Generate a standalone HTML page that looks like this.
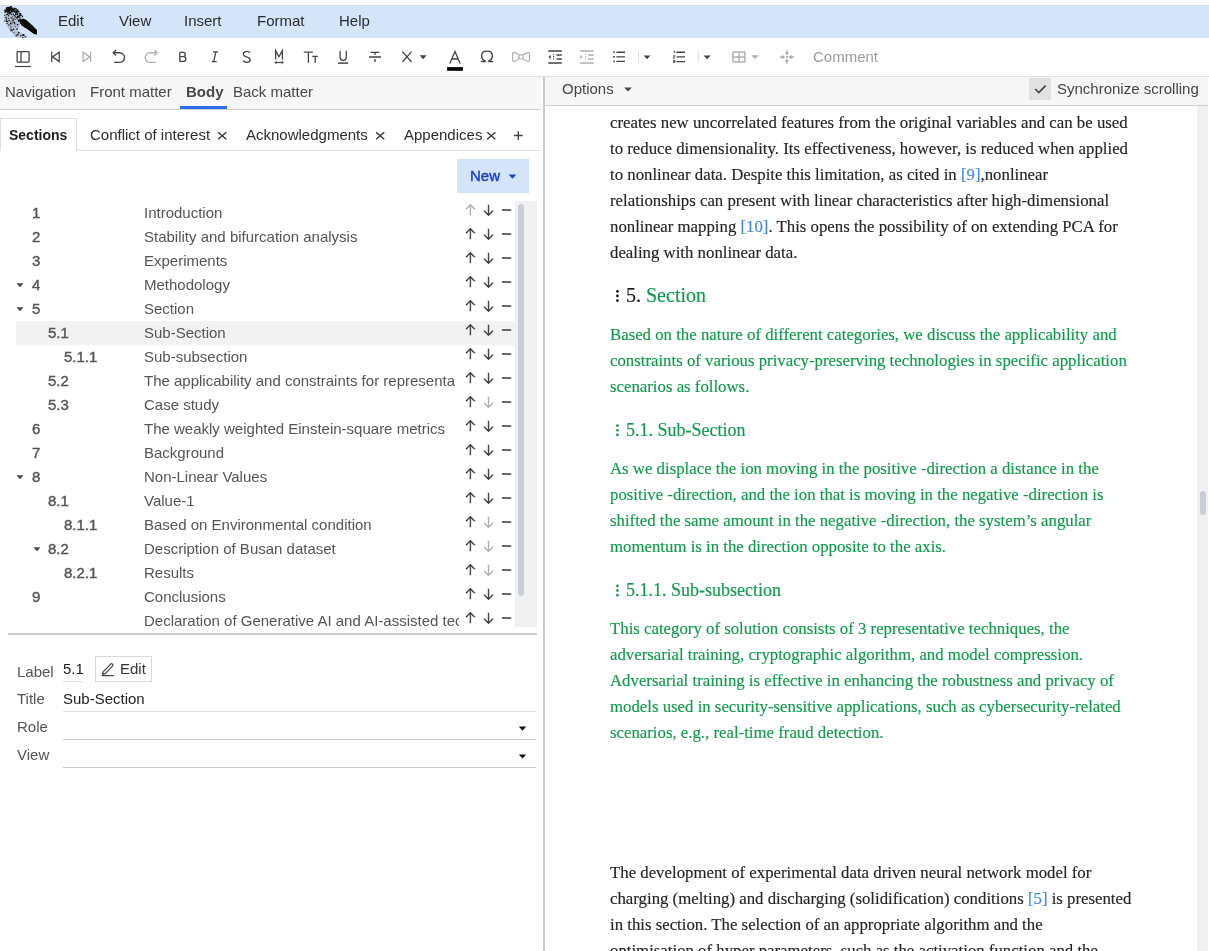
<!DOCTYPE html><html><head><meta charset="utf-8"><style>
html,body{margin:0;padding:0;}
body{width:1209px;height:951px;overflow:hidden;position:relative;background:#fff;font-family:'Liberation Sans',sans-serif;}
.t{position:absolute;white-space:nowrap;will-change:transform;}
.a{position:absolute;}
svg{position:absolute;overflow:visible;}
</style></head><body>
<div class="a" style="left:0;top:0;width:1209px;height:5px;background:#fff"></div>
<div class="a" style="left:0;top:5px;width:1209px;height:1px;background:#d8dcdf"></div>
<div class="a" style="left:0;top:6px;width:1209px;height:32px;background:#d4e5f9"></div>
<svg style="left:0;top:0" width="48" height="40" viewBox="0 0 48 40"><path d="M6,8 L11,6.2 L15,7.5 L19,11 L23,17 L22,22 L19,27 L17,31 L22,33.5 L27,36.5 L25,38 L20,38 L14,35 L8,28 L4.5,20 L4,12 Z" fill="#b4c2d3"/><g fill="#111"><circle cx="11.4" cy="10.5" r="0.48"/><circle cx="16.6" cy="17.6" r="0.65"/><circle cx="13.9" cy="32.8" r="0.54"/><circle cx="10.6" cy="10.3" r="0.57"/><circle cx="5.0" cy="12.3" r="0.62"/><circle cx="20.6" cy="13.6" r="0.66"/><circle cx="7.2" cy="21.6" r="0.72"/><circle cx="7.6" cy="9.4" r="0.76"/><circle cx="25.2" cy="37.1" r="0.52"/><circle cx="17.9" cy="14.2" r="0.62"/><circle cx="13.1" cy="18.7" r="0.70"/><circle cx="8.6" cy="10.9" r="0.47"/><circle cx="6.0" cy="17.5" r="0.80"/><circle cx="15.4" cy="8.3" r="0.59"/><circle cx="7.1" cy="23.4" r="0.66"/><circle cx="20.6" cy="14.1" r="0.52"/><circle cx="16.2" cy="17.2" r="0.46"/><circle cx="8.9" cy="13.0" r="0.53"/><circle cx="21.9" cy="21.3" r="0.77"/><circle cx="6.6" cy="10.5" r="0.77"/><circle cx="12.1" cy="23.6" r="0.46"/><circle cx="13.8" cy="9.8" r="0.59"/><circle cx="17.2" cy="13.7" r="0.76"/><circle cx="6.5" cy="20.1" r="0.55"/><circle cx="22.7" cy="35.1" r="0.74"/><circle cx="22.8" cy="37.6" r="0.56"/><circle cx="10.1" cy="9.8" r="0.81"/><circle cx="17.5" cy="28.6" r="0.47"/><circle cx="20.4" cy="19.5" r="0.83"/><circle cx="6.2" cy="10.8" r="0.53"/><circle cx="10.6" cy="22.0" r="0.59"/><circle cx="17.0" cy="11.8" r="0.82"/><circle cx="19.1" cy="18.9" r="0.47"/><circle cx="6.7" cy="7.8" r="0.55"/><circle cx="7.5" cy="8.3" r="0.80"/><circle cx="19.9" cy="14.8" r="0.57"/><circle cx="14.8" cy="10.7" r="0.56"/><circle cx="11.1" cy="17.3" r="0.60"/><circle cx="10.0" cy="8.5" r="0.47"/><circle cx="12.3" cy="9.0" r="0.67"/><circle cx="9.7" cy="8.0" r="0.74"/><circle cx="11.0" cy="24.2" r="0.47"/><circle cx="20.1" cy="15.1" r="0.64"/><circle cx="14.9" cy="9.4" r="0.53"/><circle cx="10.1" cy="12.4" r="0.53"/><circle cx="17.7" cy="10.2" r="0.83"/><circle cx="14.5" cy="15.5" r="0.59"/><circle cx="17.9" cy="17.4" r="0.56"/><circle cx="17.0" cy="29.2" r="0.74"/><circle cx="10.5" cy="7.1" r="0.50"/><circle cx="15.1" cy="16.8" r="0.75"/><circle cx="19.6" cy="15.4" r="0.61"/><circle cx="7.6" cy="10.8" r="0.81"/><circle cx="15.7" cy="12.8" r="0.85"/><circle cx="14.5" cy="10.1" r="0.49"/><circle cx="11.9" cy="8.5" r="0.55"/><circle cx="12.7" cy="16.7" r="0.56"/><circle cx="6.2" cy="10.6" r="0.72"/><circle cx="14.7" cy="23.7" r="0.76"/><circle cx="19.3" cy="15.5" r="0.55"/><circle cx="9.0" cy="25.3" r="0.57"/><circle cx="20.8" cy="15.6" r="0.65"/><circle cx="20.0" cy="19.4" r="0.72"/><circle cx="9.2" cy="12.8" r="0.57"/><circle cx="8.1" cy="12.9" r="0.72"/><circle cx="11.6" cy="11.6" r="0.75"/><circle cx="11.3" cy="14.6" r="0.75"/><circle cx="18.4" cy="16.3" r="0.59"/><circle cx="9.6" cy="7.6" r="0.67"/><circle cx="10.0" cy="8.3" r="0.65"/><circle cx="20.9" cy="20.2" r="0.62"/><circle cx="9.6" cy="13.6" r="0.80"/><circle cx="17.7" cy="16.3" r="0.85"/><circle cx="24.1" cy="35.7" r="0.57"/><circle cx="12.5" cy="10.2" r="0.55"/><circle cx="11.1" cy="12.2" r="0.67"/><circle cx="5.7" cy="10.9" r="0.61"/><circle cx="12.4" cy="12.0" r="0.53"/><circle cx="12.6" cy="22.1" r="0.56"/><circle cx="16.3" cy="36.0" r="0.65"/><circle cx="18.7" cy="32.7" r="0.76"/><circle cx="12.9" cy="9.6" r="0.74"/><circle cx="7.9" cy="21.1" r="0.50"/><circle cx="14.0" cy="8.5" r="0.65"/><circle cx="12.1" cy="30.5" r="0.81"/><circle cx="11.3" cy="6.7" r="0.51"/><circle cx="17.7" cy="34.6" r="0.85"/><circle cx="14.3" cy="11.3" r="0.47"/><circle cx="16.1" cy="35.1" r="0.54"/><circle cx="18.8" cy="21.2" r="0.82"/><circle cx="9.5" cy="10.4" r="0.71"/><circle cx="13.3" cy="14.2" r="0.71"/><circle cx="16.5" cy="18.9" r="0.47"/><circle cx="7.0" cy="12.1" r="0.65"/><circle cx="19.2" cy="32.3" r="0.57"/><circle cx="10.9" cy="7.1" r="0.76"/><circle cx="9.0" cy="9.0" r="0.47"/><circle cx="11.0" cy="12.5" r="0.48"/><circle cx="23.6" cy="34.9" r="0.80"/><circle cx="25.9" cy="36.7" r="0.53"/><circle cx="10.5" cy="8.8" r="0.75"/><circle cx="20.8" cy="23.3" r="0.79"/><circle cx="18.9" cy="17.2" r="0.61"/><circle cx="19.3" cy="17.0" r="0.51"/><circle cx="9.3" cy="11.8" r="0.73"/><circle cx="16.3" cy="10.8" r="0.53"/><circle cx="14.2" cy="12.0" r="0.49"/><circle cx="8.6" cy="18.3" r="0.61"/><circle cx="19.2" cy="20.5" r="0.70"/><circle cx="10.0" cy="12.9" r="0.83"/><circle cx="16.4" cy="12.7" r="0.61"/><circle cx="8.7" cy="9.8" r="0.77"/><circle cx="10.7" cy="23.6" r="0.78"/><circle cx="13.9" cy="11.6" r="0.74"/><circle cx="19.6" cy="13.8" r="0.51"/><circle cx="12.0" cy="10.5" r="0.77"/><circle cx="10.0" cy="13.2" r="0.65"/><circle cx="4.9" cy="20.9" r="0.65"/><circle cx="15.8" cy="14.5" r="0.84"/><circle cx="4.7" cy="15.4" r="0.53"/><circle cx="6.0" cy="11.5" r="0.76"/><circle cx="17.3" cy="14.0" r="0.62"/><circle cx="15.1" cy="19.1" r="0.71"/><circle cx="8.7" cy="10.5" r="0.45"/><circle cx="11.1" cy="29.6" r="0.79"/><circle cx="23.5" cy="34.8" r="0.78"/><circle cx="8.1" cy="11.8" r="0.73"/><circle cx="16.2" cy="10.4" r="0.85"/><circle cx="12.7" cy="9.0" r="0.76"/><circle cx="4.4" cy="12.1" r="0.48"/><circle cx="13.1" cy="20.3" r="0.84"/><circle cx="4.9" cy="10.3" r="0.83"/><circle cx="20.1" cy="15.4" r="0.75"/><circle cx="6.5" cy="21.4" r="0.55"/><circle cx="14.5" cy="8.7" r="0.79"/><circle cx="18.9" cy="20.4" r="0.78"/><circle cx="15.2" cy="26.2" r="0.54"/><circle cx="17.1" cy="10.3" r="0.56"/><circle cx="13.6" cy="10.6" r="0.79"/><circle cx="11.7" cy="11.0" r="0.58"/><circle cx="9.8" cy="12.2" r="0.85"/><circle cx="11.9" cy="10.1" r="0.78"/><circle cx="16.4" cy="11.6" r="0.81"/><circle cx="8.8" cy="24.4" r="0.52"/><circle cx="8.3" cy="8.1" r="0.69"/><circle cx="15.6" cy="14.5" r="0.69"/><circle cx="17.8" cy="12.2" r="0.74"/><circle cx="13.5" cy="29.3" r="0.77"/><circle cx="12.5" cy="10.9" r="0.69"/><circle cx="14.4" cy="22.5" r="0.74"/><circle cx="9.0" cy="11.5" r="0.55"/><circle cx="6.5" cy="18.9" r="0.69"/><circle cx="22.5" cy="16.7" r="0.58"/><circle cx="14.1" cy="22.2" r="0.51"/><circle cx="11.0" cy="26.9" r="0.69"/><circle cx="7.1" cy="9.6" r="0.57"/><circle cx="13.5" cy="15.0" r="0.49"/><circle cx="18.5" cy="21.0" r="0.55"/><circle cx="10.7" cy="31.0" r="0.48"/><circle cx="20.9" cy="35.7" r="0.80"/><circle cx="21.2" cy="15.2" r="0.67"/><circle cx="14.4" cy="11.6" r="0.51"/><circle cx="17.6" cy="24.7" r="0.82"/><circle cx="16.4" cy="8.8" r="0.61"/><circle cx="13.8" cy="10.7" r="0.65"/><circle cx="15.9" cy="11.7" r="0.70"/><circle cx="17.6" cy="19.1" r="0.51"/><circle cx="6.0" cy="11.1" r="0.78"/><circle cx="18.5" cy="32.1" r="0.45"/><circle cx="22.4" cy="16.2" r="0.59"/><circle cx="7.7" cy="14.3" r="0.81"/><circle cx="17.8" cy="17.0" r="0.60"/><circle cx="9.5" cy="11.8" r="0.54"/><circle cx="11.9" cy="10.6" r="0.49"/><circle cx="9.1" cy="20.4" r="0.73"/><circle cx="17.9" cy="17.6" r="0.69"/><circle cx="11.1" cy="18.4" r="0.52"/><circle cx="10.8" cy="7.7" r="0.54"/><circle cx="6.7" cy="14.6" r="0.72"/><circle cx="19.8" cy="17.1" r="0.71"/><circle cx="20.6" cy="13.7" r="0.59"/><circle cx="18.9" cy="11.5" r="0.82"/><circle cx="7.5" cy="12.0" r="0.60"/><circle cx="9.5" cy="9.2" r="0.53"/><circle cx="10.4" cy="8.5" r="0.62"/><circle cx="18.9" cy="20.4" r="0.73"/><circle cx="8.4" cy="15.7" r="0.73"/><circle cx="19.9" cy="13.3" r="0.66"/></g><path d="M6,7.5 L10,6.4 L12.5,7.5 L11.5,10 L8,11.5 L5.5,10.5 Z" fill="#111"/><path d="M19.5,21 L23,18.5 L26,19.8 L32,25 L37,30 L37,34.5 L34,34 L27,29 L21.5,25.5 Z" fill="#0a0a0a"/></svg>
<div class="t" style="left:58px;top:11px;font-size:15px;line-height:20px;color:#2b2b2b;font-weight:normal;font-family:'Liberation Sans', sans-serif;">Edit</div>
<div class="t" style="left:119px;top:11px;font-size:15px;line-height:20px;color:#2b2b2b;font-weight:normal;font-family:'Liberation Sans', sans-serif;">View</div>
<div class="t" style="left:184px;top:11px;font-size:15px;line-height:20px;color:#2b2b2b;font-weight:normal;font-family:'Liberation Sans', sans-serif;">Insert</div>
<div class="t" style="left:257px;top:11px;font-size:15px;line-height:20px;color:#2b2b2b;font-weight:normal;font-family:'Liberation Sans', sans-serif;">Format</div>
<div class="t" style="left:339px;top:11px;font-size:15px;line-height:20px;color:#2b2b2b;font-weight:normal;font-family:'Liberation Sans', sans-serif;">Help</div>
<div class="a" style="left:0;top:76px;width:1209px;height:1px;background:#dfe1e8"></div>
<svg style="left:10px;top:44px" width="30" height="28" viewBox="10 44 30 28" fill="none" stroke="#444" stroke-width="1.3"><rect x="17.1" y="51.6" width="12" height="10.5" rx="0.8"/><line x1="21" y1="51.6" x2="21" y2="62.1"/><line x1="15" y1="66.5" x2="30.9" y2="66.5" stroke-width="1.2"/></svg>
<svg style="left:45px;top:44px" width="25" height="28" viewBox="45 44 25 28" fill="none" stroke="#444" stroke-width="1.3"><line x1="51.7" y1="51.8" x2="51.7" y2="62.1" stroke-width="1.2"/><path d="M52.6,56.9 L59.2,52.3 L59.2,61.5 Z" stroke-width="1.3"/></svg>
<svg style="left:75px;top:44px" width="25" height="28" viewBox="75 44 25 28" fill="none" stroke="#b0b0b0" stroke-width="1.3"><line x1="90.6" y1="51.8" x2="90.6" y2="62.1" stroke-width="1.2"/><path d="M89.7,56.9 L83.1,52.3 L83.1,61.5 Z" stroke-width="1.3"/></svg>
<svg style="left:105px;top:44px" width="25" height="28" viewBox="105 44 25 28" fill="none" stroke="#444" stroke-width="1.3"><path d="M113.5,52.7 H119.7 A4.85,4.85 0 0 1 119.7,62.4 H114" stroke-width="1.4"/><path d="M116,50.1 L113.3,52.7 L116,55.4" stroke-width="1.4"/></svg>
<svg style="left:140px;top:44px" width="25" height="28" viewBox="140 44 25 28" fill="none" stroke="#b0b0b0" stroke-width="1.3"><path d="M156.8,52.7 H150.1 A4.85,4.85 0 0 0 150.1,62.4 H156" stroke-width="1.4"/><path d="M154.3,50.1 L157,52.7 L154.3,55.4" stroke-width="1.4"/></svg>
<svg style="left:172px;top:44px" width="22" height="28" viewBox="172 44 22 28" fill="none" stroke="#444" stroke-width="1.3"><path d="M179.8,52.4 V61.3 H183.6 A2.3,2.3 0 0 0 183.6,56.7 H179.8 M179.8,52.4 H183.1 A2.15,2.15 0 0 1 183.1,56.7" stroke-width="1.3"/></svg>
<svg style="left:205px;top:44px" width="20" height="28" viewBox="205 44 20 28" fill="none" stroke="#444" stroke-width="1.3"><path d="M213.1,51.9 H218 M211.8,61.7 H216.7 M215.9,51.9 L213.7,61.7" stroke-width="1.25"/></svg>
<svg style="left:236px;top:44px" width="20" height="28" viewBox="236 44 20 28" fill="none" stroke="#444" stroke-width="1.3"><path d="M250,53.2 C249,51.6 246.5,51.3 245,51.8 C242.6,52.6 242.6,55.6 245.2,56.4 L247.8,57.3 C251.3,58.4 250.8,62.2 247,62.3 C245,62.4 243.6,61.6 243,60.6" stroke-width="1.3"/></svg>
<svg style="left:268px;top:44px" width="22" height="28" viewBox="268 44 22 28" fill="none" stroke="#444" stroke-width="1.3"><path d="M275.6,59.6 V50.6 L279,56.7 L282.4,50.6 V59.6" stroke-width="1.3"/><path d="M275.5,62.5 H282.7" stroke-width="1.2"/><path d="M276.6,61.2 L274.8,62.5 L276.6,63.8 M281.6,61.2 L283.4,62.5 L281.6,63.8" stroke-width="1"/></svg>
<svg style="left:298px;top:44px" width="24" height="28" viewBox="298 44 24 28" fill="none" stroke="#444" stroke-width="1.3"><path d="M303.8,52.2 H312.9 M308.4,52.2 V62.7 M312.2,56.3 H318 M315.2,56.3 V62.7" stroke-width="1.3"/></svg>
<svg style="left:332px;top:44px" width="22" height="28" viewBox="332 44 22 28" fill="none" stroke="#444" stroke-width="1.3"><path d="M340.1,51.1 V57.3 A3.1,3.1 0 0 0 346.3,57.3 V51.1" stroke-width="1.3"/><path d="M337.9,63.1 H348.2" stroke-width="1.5"/></svg>
<svg style="left:364px;top:44px" width="22" height="28" viewBox="364 44 22 28" fill="none" stroke="#444" stroke-width="1.3"><path d="M370.4,52.4 H379.5 M375,52.4 V54.8 M369,57 H381 M375,59.1 V62" stroke-width="1.4"/></svg>
<svg style="left:396px;top:44px" width="34" height="28" viewBox="396 44 34 28" fill="none" stroke="#444" stroke-width="1.3"><path d="M402.4,51.7 L411.6,62 M411.6,51.7 L402.4,62" stroke-width="1.25"/><path d="M419.6,55.3 H426.6 L423.1,59.2 Z" fill="#444" stroke="none"/></svg>
<svg style="left:444px;top:44px" width="24" height="30" viewBox="444 44 24 30" fill="none" stroke="#444" stroke-width="1.3"><path d="M449.8,63.6 L455,51.4 L460.1,63.6 M451.6,59 H458.4" stroke-width="1.3"/><rect x="447.1" y="67.1" width="15.8" height="3.7" fill="#000" stroke="none"/></svg>
<svg style="left:474px;top:44px" width="24" height="28" viewBox="474 44 24 28" fill="none" stroke="#444" stroke-width="1.3"><path d="M485.6,61.3 C482,59.8 481.6,56.6 481.6,55.8 C481.6,52.7 484,51.1 487,51.1 C490,51.1 492.4,52.7 492.4,55.8 C492.4,56.6 492,59.8 488.4,61.3" stroke-width="1.4"/><path d="M480.9,61.5 H485.7 M488.3,61.5 H493.1" stroke-width="1.3"/></svg>
<svg style="left:506px;top:44px" width="30" height="28" viewBox="506 44 30 28" fill="none" stroke="#b0b0b0" stroke-width="1.3"><path d="M512.6,53.8 C512.6,52.6 513.4,52.2 514.6,52.6 L519,54.8 V59 L514.6,61.3 C513.4,61.7 512.6,61.3 512.6,60.1 Z M529.5,53.8 C529.5,52.6 528.7,52.2 527.5,52.6 L523.1,54.8 V59 L527.5,61.3 C528.7,61.7 529.5,61.3 529.5,60.1 Z M519,54.8 H523.1 M519,59 H523.1" stroke-width="1.2"/></svg>
<svg style="left:542px;top:44px" width="26" height="28" viewBox="542 44 26 28" fill="none" stroke="#444" stroke-width="1.3"><path d="M548.2,51 H561.8000000000001 M548.2,62.9 H561.8000000000001 M556.4000000000001,54.9 H561.8000000000001 M556.4000000000001,59 H561.8000000000001" stroke-width="1.5"/><path d="M553.5,53.8 V60.4" stroke-width="1" stroke-dasharray="1.2 1"/><path d="M550.7,54.7 L548.4000000000001,57 L550.7,59.3 Z" fill="#444" stroke="none"/></svg>
<svg style="left:574px;top:44px" width="26" height="28" viewBox="574 44 26 28" fill="none" stroke="#b0b0b0" stroke-width="1.3"><path d="M580.1,51 H593.7 M580.1,62.9 H593.7 M588.3000000000001,54.9 H593.7 M588.3000000000001,59 H593.7" stroke-width="1.5"/><path d="M585.4,53.8 V60.4" stroke-width="1" stroke-dasharray="1.2 1"/><path d="M580.3000000000001,54.7 L582.8000000000001,57 L580.3000000000001,59.3 Z" fill="#b0b0b0" stroke="none"/></svg>
<svg style="left:608px;top:44px" width="22" height="28" viewBox="608 44 22 28" fill="none" stroke="#444" stroke-width="1.3"><path d="M613.2,52.2 H614.8 M613.2,56.9 H614.8 M613.2,61.4 H614.8" stroke-width="1.6"/><path d="M616.4,52.2 H625 M616.4,56.9 H625 M616.4,61.4 H625" stroke-width="1.4"/></svg>
<svg style="left:634px;top:44px" width="22" height="28" viewBox="634 44 22 28" fill="none" stroke="#444" stroke-width="1.3"><path d="M638.5,51.3 V62.5" stroke="#dcdde6" stroke-width="1"/><path d="M643.6,55.6 H650.5 L647.05,59.2 Z" fill="#444" stroke="none"/></svg>
<svg style="left:668px;top:44px" width="22" height="28" viewBox="668 44 22 28" fill="none" stroke="#444" stroke-width="1.3"><path d="M673.3,51.2 H674.8 V53.3 M673,55.8 H674.9 L673,58 H675 M673,60.4 H674.9 V62.6 H673 M673.2,61.5 H674.9" stroke-width="0.9"/><path d="M676.4,52.3 H685 M676.4,56.9 H685 M676.4,61.6 H685" stroke-width="1.4"/></svg>
<svg style="left:694px;top:44px" width="22" height="28" viewBox="694 44 22 28" fill="none" stroke="#444" stroke-width="1.3"><path d="M698.3,51.3 V62.5" stroke="#dcdde6" stroke-width="1"/><path d="M703.5,55.6 H710.8 L707.15,59.2 Z" fill="#444" stroke="none"/></svg>
<svg style="left:726px;top:44px" width="36" height="28" viewBox="726 44 36 28" fill="none" stroke="#b0b0b0" stroke-width="1.3"><rect x="732.9" y="51.9" width="12" height="10.1" rx="0.6" stroke-width="1.5"/><path d="M739,51.9 V62 M732.9,57 H744.9" stroke-width="1.4"/><path d="M751.2,55.3 H758.7 L754.95,59.1 Z" fill="#b0b0b0" stroke="none"/></svg>
<svg style="left:776px;top:44px" width="22" height="24" viewBox="776 44 22 24" fill="none" stroke="#b0b0b0" stroke-width="1.3"><path d="M786.9,49.7 V53 M786.9,61 V64.3 M779.8,57 H783 M791,57 H794" stroke-width="1.3"/><path d="M784.7,52.2 H789.1 L786.9,55.2 Z M784.7,61.8 H789.1 L786.9,58.8 Z M782.2,54.8 V59.2 L785.2,57 Z M791.6,54.8 V59.2 L788.6,57 Z" fill="#a8a8a8" stroke="none"/><rect x="786" y="56.1" width="1.8" height="1.8" fill="#a8a8a8" stroke="none"/></svg>
<div class="t" style="left:813px;top:47px;font-size:15px;line-height:20px;color:#9a9a9a;font-weight:normal;font-family:'Liberation Sans', sans-serif;">Comment</div>
<div class="a" style="left:0;top:77px;width:541px;height:32px;background:#f7f7f7"></div>
<div class="a" style="left:0;top:109px;width:541px;height:1px;background:#d0d0d0"></div>
<div class="t" style="left:5px;top:82px;font-size:15px;line-height:20px;color:#484848;font-weight:normal;font-family:'Liberation Sans', sans-serif;">Navigation</div>
<div class="t" style="left:89.5px;top:82px;font-size:15px;line-height:20px;color:#484848;font-weight:normal;font-family:'Liberation Sans', sans-serif;">Front matter</div>
<div class="t" style="left:185.5px;top:82px;font-size:15px;line-height:20px;color:#484848;font-weight:bold;font-family:'Liberation Sans', sans-serif;">Body</div>
<div class="t" style="left:233px;top:82px;font-size:15px;line-height:20px;color:#484848;font-weight:normal;font-family:'Liberation Sans', sans-serif;">Back matter</div>
<div class="a" style="left:180px;top:106px;width:47px;height:3px;background:#2b6de6"></div>
<div class="a" style="left:543px;top:77px;width:2px;height:874px;background:#cacaca"></div>
<div class="a" style="left:0;top:118px;width:75px;height:32px;border:1px solid #dcdee6;border-bottom:none;background:#fff"></div>
<div class="a" style="left:76px;top:150px;width:465px;height:1px;background:#dcdee6"></div>
<div class="t" style="left:9px;top:125px;font-size:14px;line-height:20px;color:#1e1e1e;font-weight:bold;font-family:'Liberation Sans', sans-serif;">Sections</div>
<div class="t" style="left:90px;top:125px;font-size:15px;line-height:20px;color:#2e2e2e;font-weight:normal;font-family:'Liberation Sans', sans-serif;">Conflict of interest</div>
<svg style="left:215px;top:128px" width="14" height="14" viewBox="215 128 14 14" fill="none" stroke="#333" stroke-width="1.3"><path d="M218.10000000000002,132.3 L226.3,139.2 M226.3,132.3 L218.10000000000002,139.2" stroke-width="1.4"/></svg>
<div class="t" style="left:246.2px;top:125px;font-size:15px;line-height:20px;color:#2e2e2e;font-weight:normal;font-family:'Liberation Sans', sans-serif;">Acknowledgments</div>
<svg style="left:373px;top:128px" width="14" height="14" viewBox="373 128 14 14" fill="none" stroke="#333" stroke-width="1.3"><path d="M376.1,132.3 L384.3,139.2 M384.3,132.3 L376.1,139.2" stroke-width="1.4"/></svg>
<div class="t" style="left:404.3px;top:125px;font-size:15px;line-height:20px;color:#2e2e2e;font-weight:normal;font-family:'Liberation Sans', sans-serif;">Appendices</div>
<svg style="left:484px;top:128px" width="14" height="14" viewBox="484 128 14 14" fill="none" stroke="#333" stroke-width="1.3"><path d="M487.2,132.3 L495.4,139.2 M495.4,132.3 L487.2,139.2" stroke-width="1.4"/></svg>
<svg style="left:510px;top:128px" width="16" height="16" viewBox="510 128 16 16" fill="none" stroke="#444" stroke-width="1.3"><path d="M518.3,131.2 V139.9 M513.9,135.5 H522.7" stroke-width="1.4"/></svg>
<div class="a" style="left:457px;top:159px;width:72px;height:34px;background:#d4e4fa"></div>
<div class="t" style="left:469.5px;top:166px;font-size:15px;line-height:20px;color:#1c3fca;font-weight:normal;font-family:'Liberation Sans', sans-serif;-webkit-text-stroke:0.45px #1c3fca">New</div>
<svg style="left:505px;top:170px" width="14" height="12" viewBox="505 170 14 12" fill="none" stroke="#444" stroke-width="1.3"><path d="M508.6,174.6 H516.3 L512.45,178.8 Z" fill="#1c3fca" stroke="none"/></svg>
<div class="a" style="left:16px;top:321px;width:499px;height:24px;background:#f2f2f2"></div>
<div class="a" style="left:515px;top:201px;width:22px;height:426px;background:#f0f1f3"></div>
<div class="a" style="left:518px;top:204px;width:6px;height:392px;background:#c9cdd5;border-radius:3px"></div>
<div class="a" style="left:16px;top:201px;width:443px;height:426px;overflow:hidden">
<div class="t" style="left:15.5px;top:2px;font-size:15px;line-height:20px;color:#555;-webkit-text-stroke:0.4px #555">1</div>
<div class="t" style="left:127.5px;top:2px;font-size:15px;line-height:20px;color:#555">Introduction</div>
<div class="t" style="left:15.5px;top:26px;font-size:15px;line-height:20px;color:#555;-webkit-text-stroke:0.4px #555">2</div>
<div class="t" style="left:127.5px;top:26px;font-size:15px;line-height:20px;color:#555">Stability and bifurcation analysis</div>
<div class="t" style="left:15.5px;top:50px;font-size:15px;line-height:20px;color:#555;-webkit-text-stroke:0.4px #555">3</div>
<div class="t" style="left:127.5px;top:50px;font-size:15px;line-height:20px;color:#555">Experiments</div>
<div class="t" style="left:15.5px;top:74px;font-size:15px;line-height:20px;color:#555;-webkit-text-stroke:0.4px #555">4</div>
<svg style="left:0.1999999999999993px;top:81px" width="8" height="6" viewBox="0 0 8 6"><path d="M0.4,1.2 H7.5 L3.95,5.2 Z" fill="#444"/></svg>
<div class="t" style="left:127.5px;top:74px;font-size:15px;line-height:20px;color:#555">Methodology</div>
<div class="t" style="left:15.5px;top:98px;font-size:15px;line-height:20px;color:#555;-webkit-text-stroke:0.4px #555">5</div>
<svg style="left:0.1999999999999993px;top:105px" width="8" height="6" viewBox="0 0 8 6"><path d="M0.4,1.2 H7.5 L3.95,5.2 Z" fill="#444"/></svg>
<div class="t" style="left:127.5px;top:98px;font-size:15px;line-height:20px;color:#555">Section</div>
<div class="t" style="left:31.5px;top:122px;font-size:15px;line-height:20px;color:#555;-webkit-text-stroke:0.4px #555">5.1</div>
<div class="t" style="left:127.5px;top:122px;font-size:15px;line-height:20px;color:#555">Sub-Section</div>
<div class="t" style="left:47.5px;top:146px;font-size:15px;line-height:20px;color:#555;-webkit-text-stroke:0.4px #555">5.1.1</div>
<div class="t" style="left:127.5px;top:146px;font-size:15px;line-height:20px;color:#555">Sub-subsection</div>
<div class="t" style="left:31.5px;top:170px;font-size:15px;line-height:20px;color:#555;-webkit-text-stroke:0.4px #555">5.2</div>
<div class="t" style="left:127.5px;top:170px;font-size:15px;line-height:20px;color:#555">The applicability and constraints for representa</div>
<div class="t" style="left:31.5px;top:194px;font-size:15px;line-height:20px;color:#555;-webkit-text-stroke:0.4px #555">5.3</div>
<div class="t" style="left:127.5px;top:194px;font-size:15px;line-height:20px;color:#555">Case study</div>
<div class="t" style="left:15.5px;top:218px;font-size:15px;line-height:20px;color:#555;-webkit-text-stroke:0.4px #555">6</div>
<div class="t" style="left:127.5px;top:218px;font-size:15px;line-height:20px;color:#555">The weakly weighted Einstein-square metrics</div>
<div class="t" style="left:15.5px;top:242px;font-size:15px;line-height:20px;color:#555;-webkit-text-stroke:0.4px #555">7</div>
<div class="t" style="left:127.5px;top:242px;font-size:15px;line-height:20px;color:#555">Background</div>
<div class="t" style="left:15.5px;top:266px;font-size:15px;line-height:20px;color:#555;-webkit-text-stroke:0.4px #555">8</div>
<svg style="left:0.1999999999999993px;top:273px" width="8" height="6" viewBox="0 0 8 6"><path d="M0.4,1.2 H7.5 L3.95,5.2 Z" fill="#444"/></svg>
<div class="t" style="left:127.5px;top:266px;font-size:15px;line-height:20px;color:#555">Non-Linear Values</div>
<div class="t" style="left:31.5px;top:290px;font-size:15px;line-height:20px;color:#555;-webkit-text-stroke:0.4px #555">8.1</div>
<div class="t" style="left:127.5px;top:290px;font-size:15px;line-height:20px;color:#555">Value-1</div>
<div class="t" style="left:47.5px;top:314px;font-size:15px;line-height:20px;color:#555;-webkit-text-stroke:0.4px #555">8.1.1</div>
<div class="t" style="left:127.5px;top:314px;font-size:15px;line-height:20px;color:#555">Based on Environmental condition</div>
<div class="t" style="left:31.5px;top:338px;font-size:15px;line-height:20px;color:#555;-webkit-text-stroke:0.4px #555">8.2</div>
<svg style="left:16.9px;top:345px" width="8" height="6" viewBox="0 0 8 6"><path d="M0.4,1.2 H7.5 L3.95,5.2 Z" fill="#444"/></svg>
<div class="t" style="left:127.5px;top:338px;font-size:15px;line-height:20px;color:#555">Description of Busan dataset</div>
<div class="t" style="left:47.5px;top:362px;font-size:15px;line-height:20px;color:#555;-webkit-text-stroke:0.4px #555">8.2.1</div>
<div class="t" style="left:127.5px;top:362px;font-size:15px;line-height:20px;color:#555">Results</div>
<div class="t" style="left:15.5px;top:386px;font-size:15px;line-height:20px;color:#555;-webkit-text-stroke:0.4px #555">9</div>
<div class="t" style="left:127.5px;top:386px;font-size:15px;line-height:20px;color:#555">Conclusions</div>
<div class="t" style="left:127.5px;top:410px;font-size:15px;line-height:20px;color:#555">Declaration of Generative AI and AI-assisted technologies in the writing process</div>
</div>
<svg style="left:462px;top:201px" width="54" height="24" viewBox="462 201 54 24" fill="none" stroke-width="1.4"><path d="M470.4,204.8 V215.2 M466,209.2 L470.4,204.8 L474.8,209.2" stroke="#b0b0b0"/><path d="M488.5,215.2 V204.8 M484.1,210.8 L488.5,215.2 L492.9,210.8" stroke="#444"/><path d="M501.9,210 H511.2" stroke="#5a5a5a" stroke-width="1.8"/></svg>
<svg style="left:462px;top:225px" width="54" height="24" viewBox="462 225 54 24" fill="none" stroke-width="1.4"><path d="M470.4,228.8 V239.2 M466,233.2 L470.4,228.8 L474.8,233.2" stroke="#444"/><path d="M488.5,239.2 V228.8 M484.1,234.8 L488.5,239.2 L492.9,234.8" stroke="#444"/><path d="M501.9,234 H511.2" stroke="#5a5a5a" stroke-width="1.8"/></svg>
<svg style="left:462px;top:249px" width="54" height="24" viewBox="462 249 54 24" fill="none" stroke-width="1.4"><path d="M470.4,252.8 V263.2 M466,257.2 L470.4,252.8 L474.8,257.2" stroke="#444"/><path d="M488.5,263.2 V252.8 M484.1,258.8 L488.5,263.2 L492.9,258.8" stroke="#444"/><path d="M501.9,258 H511.2" stroke="#5a5a5a" stroke-width="1.8"/></svg>
<svg style="left:462px;top:273px" width="54" height="24" viewBox="462 273 54 24" fill="none" stroke-width="1.4"><path d="M470.4,276.8 V287.2 M466,281.2 L470.4,276.8 L474.8,281.2" stroke="#444"/><path d="M488.5,287.2 V276.8 M484.1,282.8 L488.5,287.2 L492.9,282.8" stroke="#444"/><path d="M501.9,282 H511.2" stroke="#5a5a5a" stroke-width="1.8"/></svg>
<svg style="left:462px;top:297px" width="54" height="24" viewBox="462 297 54 24" fill="none" stroke-width="1.4"><path d="M470.4,300.8 V311.2 M466,305.2 L470.4,300.8 L474.8,305.2" stroke="#444"/><path d="M488.5,311.2 V300.8 M484.1,306.8 L488.5,311.2 L492.9,306.8" stroke="#444"/><path d="M501.9,306 H511.2" stroke="#5a5a5a" stroke-width="1.8"/></svg>
<svg style="left:462px;top:321px" width="54" height="24" viewBox="462 321 54 24" fill="none" stroke-width="1.4"><path d="M470.4,324.8 V335.2 M466,329.2 L470.4,324.8 L474.8,329.2" stroke="#444"/><path d="M488.5,335.2 V324.8 M484.1,330.8 L488.5,335.2 L492.9,330.8" stroke="#444"/><path d="M501.9,330 H511.2" stroke="#5a5a5a" stroke-width="1.8"/></svg>
<svg style="left:462px;top:345px" width="54" height="24" viewBox="462 345 54 24" fill="none" stroke-width="1.4"><path d="M470.4,348.8 V359.2 M466,353.2 L470.4,348.8 L474.8,353.2" stroke="#444"/><path d="M488.5,359.2 V348.8 M484.1,354.8 L488.5,359.2 L492.9,354.8" stroke="#444"/><path d="M501.9,354 H511.2" stroke="#5a5a5a" stroke-width="1.8"/></svg>
<svg style="left:462px;top:369px" width="54" height="24" viewBox="462 369 54 24" fill="none" stroke-width="1.4"><path d="M470.4,372.8 V383.2 M466,377.2 L470.4,372.8 L474.8,377.2" stroke="#444"/><path d="M488.5,383.2 V372.8 M484.1,378.8 L488.5,383.2 L492.9,378.8" stroke="#444"/><path d="M501.9,378 H511.2" stroke="#5a5a5a" stroke-width="1.8"/></svg>
<svg style="left:462px;top:393px" width="54" height="24" viewBox="462 393 54 24" fill="none" stroke-width="1.4"><path d="M470.4,396.8 V407.2 M466,401.2 L470.4,396.8 L474.8,401.2" stroke="#444"/><path d="M488.5,407.2 V396.8 M484.1,402.8 L488.5,407.2 L492.9,402.8" stroke="#b0b0b0"/><path d="M501.9,402 H511.2" stroke="#5a5a5a" stroke-width="1.8"/></svg>
<svg style="left:462px;top:417px" width="54" height="24" viewBox="462 417 54 24" fill="none" stroke-width="1.4"><path d="M470.4,420.8 V431.2 M466,425.2 L470.4,420.8 L474.8,425.2" stroke="#444"/><path d="M488.5,431.2 V420.8 M484.1,426.8 L488.5,431.2 L492.9,426.8" stroke="#444"/><path d="M501.9,426 H511.2" stroke="#5a5a5a" stroke-width="1.8"/></svg>
<svg style="left:462px;top:441px" width="54" height="24" viewBox="462 441 54 24" fill="none" stroke-width="1.4"><path d="M470.4,444.8 V455.2 M466,449.2 L470.4,444.8 L474.8,449.2" stroke="#444"/><path d="M488.5,455.2 V444.8 M484.1,450.8 L488.5,455.2 L492.9,450.8" stroke="#444"/><path d="M501.9,450 H511.2" stroke="#5a5a5a" stroke-width="1.8"/></svg>
<svg style="left:462px;top:465px" width="54" height="24" viewBox="462 465 54 24" fill="none" stroke-width="1.4"><path d="M470.4,468.8 V479.2 M466,473.2 L470.4,468.8 L474.8,473.2" stroke="#444"/><path d="M488.5,479.2 V468.8 M484.1,474.8 L488.5,479.2 L492.9,474.8" stroke="#444"/><path d="M501.9,474 H511.2" stroke="#5a5a5a" stroke-width="1.8"/></svg>
<svg style="left:462px;top:489px" width="54" height="24" viewBox="462 489 54 24" fill="none" stroke-width="1.4"><path d="M470.4,492.8 V503.2 M466,497.2 L470.4,492.8 L474.8,497.2" stroke="#444"/><path d="M488.5,503.2 V492.8 M484.1,498.8 L488.5,503.2 L492.9,498.8" stroke="#444"/><path d="M501.9,498 H511.2" stroke="#5a5a5a" stroke-width="1.8"/></svg>
<svg style="left:462px;top:513px" width="54" height="24" viewBox="462 513 54 24" fill="none" stroke-width="1.4"><path d="M470.4,516.8 V527.2 M466,521.2 L470.4,516.8 L474.8,521.2" stroke="#444"/><path d="M488.5,527.2 V516.8 M484.1,522.8 L488.5,527.2 L492.9,522.8" stroke="#b0b0b0"/><path d="M501.9,522 H511.2" stroke="#5a5a5a" stroke-width="1.8"/></svg>
<svg style="left:462px;top:537px" width="54" height="24" viewBox="462 537 54 24" fill="none" stroke-width="1.4"><path d="M470.4,540.8 V551.2 M466,545.2 L470.4,540.8 L474.8,545.2" stroke="#444"/><path d="M488.5,551.2 V540.8 M484.1,546.8 L488.5,551.2 L492.9,546.8" stroke="#b0b0b0"/><path d="M501.9,546 H511.2" stroke="#5a5a5a" stroke-width="1.8"/></svg>
<svg style="left:462px;top:561px" width="54" height="24" viewBox="462 561 54 24" fill="none" stroke-width="1.4"><path d="M470.4,564.8 V575.2 M466,569.2 L470.4,564.8 L474.8,569.2" stroke="#444"/><path d="M488.5,575.2 V564.8 M484.1,570.8 L488.5,575.2 L492.9,570.8" stroke="#b0b0b0"/><path d="M501.9,570 H511.2" stroke="#5a5a5a" stroke-width="1.8"/></svg>
<svg style="left:462px;top:585px" width="54" height="24" viewBox="462 585 54 24" fill="none" stroke-width="1.4"><path d="M470.4,588.8 V599.2 M466,593.2 L470.4,588.8 L474.8,593.2" stroke="#444"/><path d="M488.5,599.2 V588.8 M484.1,594.8 L488.5,599.2 L492.9,594.8" stroke="#444"/><path d="M501.9,594 H511.2" stroke="#5a5a5a" stroke-width="1.8"/></svg>
<svg style="left:462px;top:609px" width="54" height="24" viewBox="462 609 54 24" fill="none" stroke-width="1.4"><path d="M470.4,612.8 V623.2 M466,617.2 L470.4,612.8 L474.8,617.2" stroke="#444"/><path d="M488.5,623.2 V612.8 M484.1,618.8 L488.5,623.2 L492.9,618.8" stroke="#444"/><path d="M501.9,618 H511.2" stroke="#5a5a5a" stroke-width="1.8"/></svg>
<div class="a" style="left:8px;top:633px;width:529px;height:2px;background:#cfcfcf"></div>
<div class="t" style="left:17px;top:662px;font-size:15px;line-height:20px;color:#555;font-weight:normal;font-family:'Liberation Sans', sans-serif;">Label</div>
<div class="t" style="left:62.5px;top:659px;font-size:15px;line-height:20px;color:#222;font-weight:normal;font-family:'Liberation Sans', sans-serif;">5.1</div>
<div class="a" style="left:63px;top:681px;width:20px;height:1px;background:#dfe2ea"></div>
<div class="a" style="left:95px;top:656px;width:55px;height:24px;border:1px solid #d9d9d9"></div>
<svg style="left:99px;top:660px" width="18" height="18" viewBox="99 660 18 18" fill="none" stroke="#444" stroke-width="1.3"><path d="M103.2,671.8 L110.6,664.2 A1.3,1.3 0 0 1 112.5,666.1 L105.1,673.7 L102.7,674.2 Z" stroke-width="1.2"/><path d="M101.8,675.6 H113.8" stroke-width="1.3"/></svg>
<div class="t" style="left:120px;top:659px;font-size:15px;line-height:20px;color:#333;font-weight:normal;font-family:'Liberation Sans', sans-serif;">Edit</div>
<div class="t" style="left:17px;top:689px;font-size:15px;line-height:20px;color:#555;font-weight:normal;font-family:'Liberation Sans', sans-serif;">Title</div>
<div class="t" style="left:62.5px;top:689px;font-size:15px;line-height:20px;color:#222;font-weight:normal;font-family:'Liberation Sans', sans-serif;">Sub-Section</div>
<div class="a" style="left:63px;top:711px;width:473px;height:1px;background:#e0e3ea"></div>
<div class="t" style="left:17px;top:717px;font-size:15px;line-height:20px;color:#555;font-weight:normal;font-family:'Liberation Sans', sans-serif;">Role</div>
<div class="a" style="left:63px;top:739px;width:473px;height:1px;background:#cdcdcd"></div>
<svg style="left:516px;top:724px" width="12" height="10" viewBox="516 724 12 10" fill="none" stroke="#444" stroke-width="1.3"><path d="M518.8,726.6 H526.2 L522.5,730.7 Z" fill="#111" stroke="none"/></svg>
<div class="t" style="left:17px;top:745px;font-size:15px;line-height:20px;color:#555;font-weight:normal;font-family:'Liberation Sans', sans-serif;">View</div>
<div class="a" style="left:63px;top:767px;width:473px;height:1px;background:#cdcdcd"></div>
<svg style="left:516px;top:752px" width="12" height="10" viewBox="516 752 12 10" fill="none" stroke="#444" stroke-width="1.3"><path d="M518.8,754.6 H526.2 L522.5,758.6 Z" fill="#111" stroke="none"/></svg>
<div class="a" style="left:545px;top:77px;width:663px;height:28px;background:#f7f7f7"></div>
<div class="a" style="left:545px;top:105px;width:663px;height:1px;background:#d0d0d0"></div>
<div class="t" style="left:562px;top:79px;font-size:15px;line-height:20px;color:#444;font-weight:normal;font-family:'Liberation Sans', sans-serif;">Options</div>
<svg style="left:621px;top:85px" width="14" height="10" viewBox="621 85 14 10" fill="none" stroke="#444" stroke-width="1.3"><path d="M624.2,87.5 H631.8 L628,91.4 Z" fill="#444" stroke="none"/></svg>
<div class="a" style="left:1029px;top:78px;width:22px;height:22px;background:#e1e1e1"></div>
<svg style="left:1032px;top:82px" width="16" height="14" viewBox="1032 82 16 14" fill="none" stroke="#444" stroke-width="1.3"><path d="M1035.2,89 L1038.8,92.5 L1045.6,85.6" stroke-width="1.6"/></svg>
<div class="t" style="left:1057px;top:79px;font-size:15px;line-height:20px;color:#444;font-weight:normal;font-family:'Liberation Sans', sans-serif;">Synchronize scrolling</div>
<div class="a" style="left:1197px;top:106px;width:11px;height:845px;background:#f0f1f3"></div>
<div class="a" style="left:1200px;top:491px;width:6px;height:24px;background:#c9cdd5;border-radius:3px"></div>
<div class="t" style="left:610px;top:110px;font-family:'Liberation Serif', serif;font-size:16.8px;line-height:26px;color:#242424;-webkit-text-stroke-width:0.15px">creates new uncorrelated features from the original variables and can be used</div>
<div class="t" style="left:610px;top:136px;font-family:'Liberation Serif', serif;font-size:16.8px;line-height:26px;color:#242424;-webkit-text-stroke-width:0.15px">to reduce dimensionality. Its effectiveness, however, is reduced when applied</div>
<div class="t" style="left:610px;top:162px;font-family:'Liberation Serif', serif;font-size:16.8px;line-height:26px;color:#242424;-webkit-text-stroke-width:0.15px">to nonlinear data. Despite this limitation, as cited in <span style="color:#4388e0">[9]</span>,nonlinear</div>
<div class="t" style="left:610px;top:188px;font-family:'Liberation Serif', serif;font-size:16.8px;line-height:26px;color:#242424;-webkit-text-stroke-width:0.15px">relationships can present with linear characteristics after high-dimensional</div>
<div class="t" style="left:610px;top:214px;font-family:'Liberation Serif', serif;font-size:16.8px;line-height:26px;color:#242424;-webkit-text-stroke-width:0.15px">nonlinear mapping <span style="color:#4388e0">[10]</span>. This opens the possibility of on extending PCA for</div>
<div class="t" style="left:610px;top:240px;font-family:'Liberation Serif', serif;font-size:16.8px;line-height:26px;color:#242424;-webkit-text-stroke-width:0.15px">dealing with nonlinear data.</div>
<svg style="left:614px;top:288px" width="7" height="16" viewBox="614 288 7 16"><circle cx="617.45" cy="291.3" r="1.35" fill="#111"/><circle cx="617.45" cy="295.95" r="1.35" fill="#111"/><circle cx="617.45" cy="300.6" r="1.35" fill="#111"/></svg>
<div class="t" style="left:626px;top:282px;font-family:'Liberation Serif', serif;font-size:20px;line-height:26px;color:#151515;-webkit-text-stroke-width:0.15px">5. <span style="color:#0e9a4a">Section</span></div>
<div class="t" style="left:610px;top:322px;font-family:'Liberation Serif', serif;font-size:16.8px;line-height:26px;color:#0e9a4a;-webkit-text-stroke-width:0.15px">Based on the nature of different categories, we discuss the applicability and</div>
<div class="t" style="left:610px;top:348px;font-family:'Liberation Serif', serif;font-size:16.8px;line-height:26px;color:#0e9a4a;-webkit-text-stroke-width:0.15px">constraints of various privacy-preserving technologies in specific application</div>
<div class="t" style="left:610px;top:374px;font-family:'Liberation Serif', serif;font-size:16.8px;line-height:26px;color:#0e9a4a;-webkit-text-stroke-width:0.15px">scenarios as follows.</div>
<svg style="left:614px;top:422px" width="7" height="16" viewBox="614 422 7 16"><circle cx="617.45" cy="425.6" r="1.35" fill="#0e9a4a"/><circle cx="617.45" cy="430.25" r="1.35" fill="#0e9a4a"/><circle cx="617.45" cy="434.90000000000003" r="1.35" fill="#0e9a4a"/></svg>
<div class="t" style="left:626px;top:417px;font-family:'Liberation Serif', serif;font-size:18px;line-height:26px;color:#0e9a4a;-webkit-text-stroke-width:0.15px">5.1. Sub-Section</div>
<div class="t" style="left:610px;top:456px;font-family:'Liberation Serif', serif;font-size:16.8px;line-height:26px;color:#0e9a4a;-webkit-text-stroke-width:0.15px">As we displace the ion moving in the positive -direction a distance in the</div>
<div class="t" style="left:610px;top:482px;font-family:'Liberation Serif', serif;font-size:16.8px;line-height:26px;color:#0e9a4a;-webkit-text-stroke-width:0.15px">positive -direction, and the ion that is moving in the negative -direction is</div>
<div class="t" style="left:610px;top:508px;font-family:'Liberation Serif', serif;font-size:16.8px;line-height:26px;color:#0e9a4a;-webkit-text-stroke-width:0.15px">shifted the same amount in the negative -direction, the system’s angular</div>
<div class="t" style="left:610px;top:534px;font-family:'Liberation Serif', serif;font-size:16.8px;line-height:26px;color:#0e9a4a;-webkit-text-stroke-width:0.15px">momentum is in the direction opposite to the axis.</div>
<svg style="left:614px;top:582px" width="7" height="16" viewBox="614 582 7 16"><circle cx="617.45" cy="585.9" r="1.35" fill="#0e9a4a"/><circle cx="617.45" cy="590.55" r="1.35" fill="#0e9a4a"/><circle cx="617.45" cy="595.1999999999999" r="1.35" fill="#0e9a4a"/></svg>
<div class="t" style="left:626px;top:577px;font-family:'Liberation Serif', serif;font-size:18px;line-height:26px;color:#0e9a4a;-webkit-text-stroke-width:0.15px">5.1.1. Sub-subsection</div>
<div class="t" style="left:610px;top:616px;font-family:'Liberation Serif', serif;font-size:16.8px;line-height:26px;color:#0e9a4a;-webkit-text-stroke-width:0.15px">This category of solution consists of 3 representative techniques, the</div>
<div class="t" style="left:610px;top:642px;font-family:'Liberation Serif', serif;font-size:16.8px;line-height:26px;color:#0e9a4a;-webkit-text-stroke-width:0.15px">adversarial training, cryptographic algorithm, and model compression.</div>
<div class="t" style="left:610px;top:668px;font-family:'Liberation Serif', serif;font-size:16.8px;line-height:26px;color:#0e9a4a;-webkit-text-stroke-width:0.15px">Adversarial training is effective in enhancing the robustness and privacy of</div>
<div class="t" style="left:610px;top:694px;font-family:'Liberation Serif', serif;font-size:16.8px;line-height:26px;color:#0e9a4a;-webkit-text-stroke-width:0.15px">models used in security-sensitive applications, such as cybersecurity-related</div>
<div class="t" style="left:610px;top:720px;font-family:'Liberation Serif', serif;font-size:16.8px;line-height:26px;color:#0e9a4a;-webkit-text-stroke-width:0.15px">scenarios, e.g., real-time fraud detection.</div>
<div class="t" style="left:610px;top:860px;font-family:'Liberation Serif', serif;font-size:16.8px;line-height:26px;color:#242424;-webkit-text-stroke-width:0.15px">The development of experimental data driven neural network model for</div>
<div class="t" style="left:610px;top:886px;font-family:'Liberation Serif', serif;font-size:16.8px;line-height:26px;color:#242424;-webkit-text-stroke-width:0.15px">charging (melting) and discharging (solidification) conditions <span style="color:#4388e0">[5]</span> is presented</div>
<div class="t" style="left:610px;top:912px;font-family:'Liberation Serif', serif;font-size:16.8px;line-height:26px;color:#242424;-webkit-text-stroke-width:0.15px">in this section. The selection of an appropriate algorithm and the</div>
<div class="t" style="left:610px;top:938px;font-family:'Liberation Serif', serif;font-size:16.8px;line-height:26px;color:#242424;-webkit-text-stroke-width:0.15px">optimisation of hyper parameters, such as the activation function and the</div>
</body></html>
